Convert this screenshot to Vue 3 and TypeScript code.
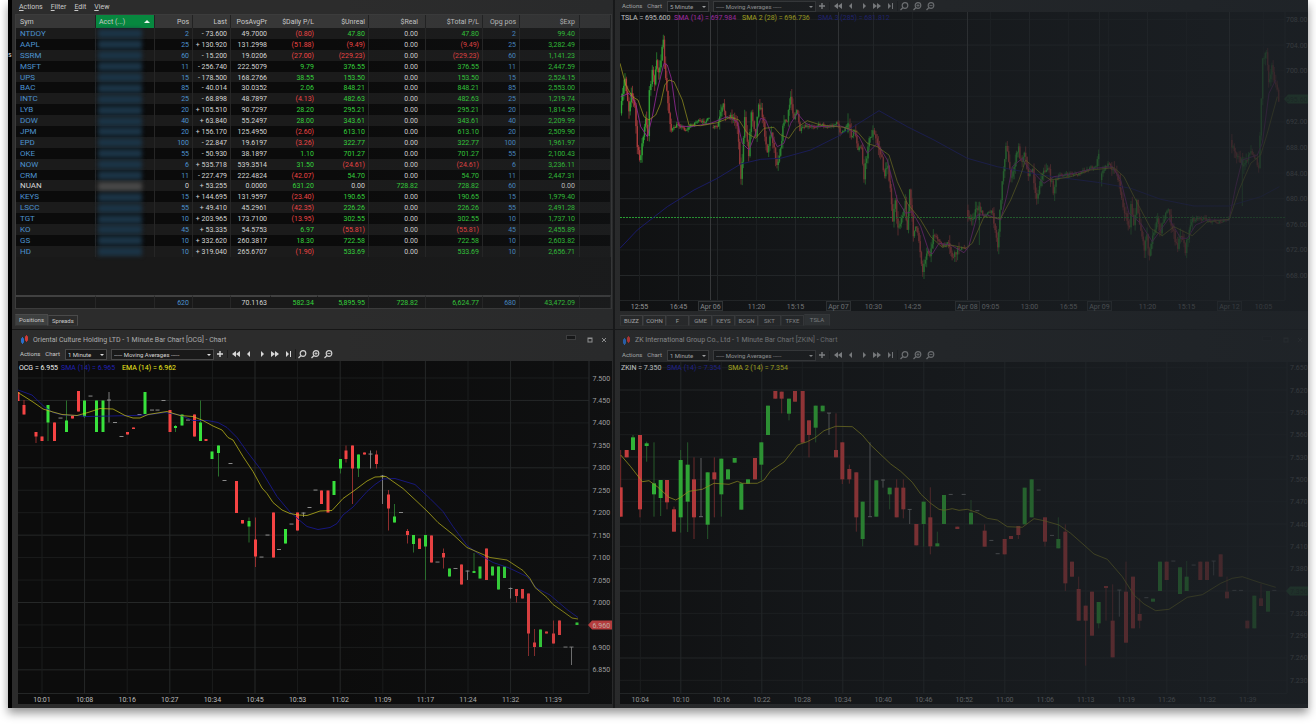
<script setup lang="ts">
import { ref } from 'vue'

type Kind = 'up' | 'down' | 'flat'
type Point = [number, number]
type RawCandle = [string, number, number, number, number, number]

interface Candle { kind: Kind; x: number; high: number; top: number; bottom: number; low: number }
interface Label { text: string; at: number; day?: boolean }
interface Chart {
  id: string
  title: string
  interval: string
  box: { x: number; y: number; w: number; h: number }
  axisX: number
  axisY: number
  tickX: number
  bodyWidth: number
  columns: Label[]
  rows: Label[]
  legend: { text: string; x: number; tone: string }[]
  lines: { tone: string; points: string }[]
  candles: Candle[]
  tag: { text: string; y: number; tone: string }
  level?: number
}

const kinds: Record<string, Kind> = { g: 'up', r: 'down', n: 'flat' }

const toCandles = (raw: RawCandle[], dx = 0, dy = 0, unit = 1): Candle[] =>
  raw.map(([k, x, high, top, bottom, low]) => ({
    kind: kinds[k],
    x: dx + x / unit,
    high: dy + high / unit,
    top: dy + top / unit,
    bottom: dy + bottom / unit,
    low: dy + low / unit,
  }))

const toLine = (points: Point[], dx = 0, dy = 0, unit = 1): string =>
  points.map(([x, y]) => `${(dx + x / unit).toFixed(1)},${(dy + y / unit).toFixed(1)}`).join(' ')

const spread = (texts: string[], start: number, step: number): Label[] =>
  texts.map((text, i) => ({ text, at: start + i * step }))

/* Builds a dense run of thin bars that follows a price path. */
const denseBars = (paths: Point[][], dx: number, unit: number): Candle[] => {
  const out: Candle[] = []
  let seed = 7
  const rnd = () => {
    seed = (seed * 16807) % 2147483647
    return seed / 2147483647
  }
  for (const path of paths) {
    let previous = path[0][1]
    for (let i = 0; i < path.length - 1; i++) {
      const [x0, y0] = path[i]
      const [x1, y1] = path[i + 1]
      const slope = Math.abs(y1 - y0)
      const steps = Math.max(1, Math.round((x1 - x0) / 3.8))
      for (let s = 1; s <= steps; s++) {
        const t = s / steps
        const noise = slope > 22 ? 22 : 9
        const close = y0 + (y1 - y0) * t + (rnd() - 0.5) * noise
        const top = Math.min(previous, close)
        const bottom = Math.max(previous, close)
        const wick = slope > 22 ? 24 : 8
        out.push({
          kind: close < previous ? 'up' : 'down',
          x: dx + (x0 + (x1 - x0) * t) / unit,
          high: (top - rnd() * wick) / unit,
          top: top / unit,
          bottom: bottom / unit,
          low: (bottom + rnd() * wick) / unit,
        })
        previous = close
      }
    }
  }
  return out
}

const columns = ['sym', 'acct', 'pos', 'last', 'avg', 'daily', 'unreal', 'real', 'total', 'opg', 'exp', 'rest']
const headings = ['Sym', 'Acct (...)', 'Pos', 'Last', 'PosAvgPr', '$Daily P/L', '$Unreal', '$Real', '$Total P/L', 'Opg pos', '$Exp', '']

const positions: string[][] = [
  ['NTDOY', '2', '- 73.600', '49.7000', '(0.80)', '47.80', '0.00', '47.80', '2', '99.40'],
  ['AAPL', '25', '+ 130.920', '131.2998', '(51.88)', '(9.49)', '0.00', '(9.49)', '25', '3,282.49'],
  ['SSRM', '60', '- 15.200', '19.0206', '(27.00)', '(229.23)', '0.00', '(229.23)', '60', '1,141.23'],
  ['MSFT', '11', '- 256.740', '222.5079', '9.79', '376.55', '0.00', '376.55', '11', '2,447.59'],
  ['UPS', '15', '- 178.500', '168.2766', '38.55', '153.50', '0.00', '153.50', '15', '2,524.15'],
  ['BAC', '85', '- 40.014', '30.0352', '2.06', '848.21', '0.00', '848.21', '85', '2,553.00'],
  ['INTC', '25', '- 68.898', '48.7897', '(4.13)', '482.63', '0.00', '482.63', '25', '1,219.74'],
  ['LYB', '20', '+ 105.510', '90.7297', '28.20', '295.21', '0.00', '295.21', '20', '1,814.59'],
  ['DOW', '40', '+ 63.840', '55.2497', '28.00', '343.61', '0.00', '343.61', '40', '2,209.99'],
  ['JPM', '20', '+ 156.170', '125.4950', '(2.60)', '613.10', '0.00', '613.10', '20', '2,509.90'],
  ['EPD', '100', '- 22.847', '19.6197', '(3.26)', '322.77', '0.00', '322.77', '100', '1,961.97'],
  ['OKE', '55', '- 50.930', '38.1897', '1.10', '701.27', '0.00', '701.27', '55', '2,100.43'],
  ['NOW', '6', '+ 535.718', '539.3514', '31.50', '(24.61)', '0.00', '(24.61)', '6', '3,236.11'],
  ['CRM', '11', '- 227.479', '222.4824', '(42.07)', '54.70', '0.00', '54.70', '11', '2,447.31'],
  ['NUAN', '0', '+ 53.255', '0.0000', '631.20', '0.00', '728.82', '728.82', '60', '0.00'],
  ['KEYS', '15', '+ 144.695', '131.9597', '(23.40)', '190.65', '0.00', '190.65', '15', '1,979.40'],
  ['LSCC', '55', '+ 49.410', '45.2961', '(42.35)', '226.26', '0.00', '226.26', '55', '2,491.28'],
  ['TGT', '10', '+ 203.965', '173.7100', '(13.95)', '302.55', '0.00', '302.55', '10', '1,737.10'],
  ['KO', '45', '+ 53.335', '54.5753', '6.97', '(55.81)', '0.00', '(55.81)', '45', '2,455.89'],
  ['GS', '10', '+ 332.620', '260.3817', '18.30', '722.58', '0.00', '722.58', '10', '2,603.82'],
  ['HD', '10', '+ 319.040', '265.6707', '(1.90)', '533.69', '0.00', '533.69', '10', '2,656.71'],
]
const totals = ['', '620', '', '70.1163', '582.34', '5,895.95', '728.82', '6,624.77', '680', '43,472.09']

const moneyTone = (value: string) =>
  value.startsWith('(') ? 'loss' : value === '0.00' || value === '' ? 'plain' : 'gain'

const cellTone = (row: string[], i: number): string => {
  if (i === 0 || i === 1) return row[0] === 'NUAN' ? 'plain' : 'link'
  if (i === 8) return 'link'
  if (i === 2 || i === 3) return 'plain'
  return moneyTone(row[i])
}

const menus = ['Actions', 'Filter', 'Edit', 'View']
const sheetTabs = ['Positions', 'Spreads']
const activeSheet = ref('Positions')
const symbolTabs = ['BUZZ', 'COHN', 'F', 'GME', 'KEYS', 'BCGN', 'SKT', 'TFXE', 'TSLA']
const activeSymbol = ref('TSLA')

const ocgCandles: RawCandle[] = [
  ['r', 18, 392, 392, 401, 401], ['r', 24, 400, 405, 414.5, 414.5], ['r', 36, 432, 432, 436.5, 443],
  ['r', 42, 436.5, 436.5, 441, 441], ['g', 48, 405, 405, 422.5, 441], ['r', 54.5, 422.5, 422.5, 441, 441],
  ['n', 60.5, 418, 418, 418, 418], ['g', 66.5, 400.5, 420.5, 432, 432], ['r', 72.5, 415.5, 415.5, 418.5, 418.5],
  ['r', 78.5, 391, 391, 411.5, 411.5], ['g', 84.5, 400.5, 400.5, 416.5, 418], ['n', 90.5, 396, 396, 396, 396],
  ['g', 96.5, 400.5, 400.5, 432, 432], ['g', 103, 400.5, 400.5, 432, 432], ['n', 109, 392, 400, 400, 422.5],
  ['n', 115, 422.5, 422.5, 422.5, 422.5], ['n', 121.5, 436.5, 436.5, 436.5, 436.5], ['r', 127.5, 432, 432, 434.5, 434.5],
  ['r', 133.5, 427.5, 427.5, 429, 429], ['n', 139.5, 414.5, 414.5, 414.5, 414.5], ['g', 145, 392, 392, 414, 414],
  ['n', 152, 410, 410, 410, 410], ['n', 157.5, 410, 410, 410, 410], ['n', 163.5, 400.5, 400.5, 400.5, 400.5],
  ['r', 170, 410, 410, 432, 432], ['g', 175.5, 425, 426, 428, 432], ['g', 182, 414.5, 414.5, 425.5, 425.5],
  ['n', 188, 420, 420, 420, 420], ['r', 194.5, 414.5, 414.5, 436.5, 436.5], ['g', 200.5, 400.5, 422.5, 441, 441],
  ['r', 206, 439, 439, 441, 441], ['g', 212, 451.5, 451.5, 459, 459], ['g', 218.5, 445.5, 445.5, 453, 476.5],
  ['n', 224.5, 480.5, 480.5, 480.5, 480.5], ['n', 230.5, 463.5, 463.5, 463.5, 463.5], ['r', 236.5, 481, 481, 513, 513],
  ['r', 242.5, 520, 520, 523.5, 523.5], ['g', 249, 517.5, 521, 526.5, 542.5], ['r', 255.5, 517.5, 539.5, 556.5, 567],
  ['n', 261.5, 557, 557, 557, 557], ['n', 267.5, 535, 535, 535, 535], ['r', 273.5, 512.5, 512.5, 557.5, 557.5],
  ['n', 279, 549.5, 549.5, 549.5, 549.5], ['g', 285.5, 529, 529, 543.5, 543.5], ['n', 291.5, 524, 524, 524, 524],
  ['r', 297.5, 512.5, 512.5, 530.5, 530.5], ['n', 303.5, 512.5, 513, 513, 517], ['n', 309.5, 507.5, 507.5, 507.5, 507.5],
  ['n', 315.5, 490, 490, 490, 490], ['r', 321.5, 490.5, 490.5, 504, 504], ['r', 328, 490.5, 490.5, 512.5, 512.5],
  ['g', 334, 481, 481, 495, 495], ['g', 340.5, 459, 459, 468.5, 473.5], ['r', 346, 445.5, 450.5, 459, 462.5],
  ['r', 352.5, 445.5, 445.5, 468.5, 504], ['g', 358.5, 454.5, 454.5, 468.5, 477], ['r', 364.5, 452.5, 452.5, 454.5, 454.5],
  ['n', 370.5, 450.5, 454, 454, 468.5], ['r', 376.5, 450.5, 454.5, 464, 468.5], ['n', 382.5, 475, 476, 476, 504],
  ['r', 388.5, 490, 494.5, 508.5, 530.5], ['g', 394.5, 504, 516.5, 522.5, 522.5], ['n', 401, 512.5, 512.5, 512.5, 512.5],
  ['r', 407.5, 529, 531, 535, 543.5], ['g', 413.5, 535, 535, 544, 552.5], ['r', 419.5, 538.5, 538.5, 549, 549],
  ['g', 425.5, 535, 535, 546.5, 580], ['r', 431.5, 535.5, 535.5, 562.5, 562.5], ['n', 437.5, 562, 562, 562, 562],
  ['r', 443.5, 548.5, 553, 557.5, 568.5], ['g', 449.5, 568.5, 568.5, 576.5, 576.5], ['n', 455.5, 568.5, 568.5, 568.5, 568.5],
  ['r', 461.5, 564.5, 564.5, 584.5, 584.5], ['n', 467.5, 570.5, 571, 571, 580], ['g', 474, 553, 571, 573, 573],
  ['g', 480, 566.5, 566.5, 578.5, 578.5], ['r', 486.5, 548.5, 548.5, 580, 580], ['g', 492.5, 566.5, 566.5, 575.5, 575.5],
  ['g', 498.5, 566.5, 566.5, 589.5, 589.5], ['g', 504.5, 566.5, 566.5, 578, 578], ['n', 510.5, 587.5, 588.5, 588.5, 598.5],
  ['r', 516.5, 589, 589, 596, 602.5], ['r', 522.5, 589, 589, 598.5, 598.5], ['r', 528.5, 593.5, 593.5, 633.5, 656],
  ['r', 534.5, 629, 642.5, 647, 656], ['g', 540.5, 629.5, 629.5, 647, 647], ['r', 546.5, 631.5, 631.5, 633.5, 633.5],
  ['r', 553.5, 620.5, 633.5, 643.5, 643.5], ['r', 559.5, 620.5, 620.5, 635, 635], ['n', 565.5, 647, 647, 647, 647],
  ['n', 571.5, 647, 647, 647, 665], ['g', 577, 622.5, 622.5, 625, 625],
]

const ocgEma: Point[] = [
  [18, 392.5], [33, 402], [43, 409], [53, 412], [62, 414.5], [77, 415.5], [88, 412.5], [100, 408.5], [113, 409],
  [125, 415.5], [133, 418], [140, 418], [148, 414.5], [167, 411.5], [180, 415.5], [193, 416.5], [203, 420.5],
  [213, 426], [222, 430], [228, 437.5], [233, 440], [243, 456.5], [253, 471.5], [262, 488], [267, 493.5],
  [273, 502.5], [282, 510], [290, 513.5], [298, 515], [307, 515.5], [313, 513.5], [320, 511], [332, 510.5],
  [343, 498.5], [355, 490], [367, 481], [375, 477], [386, 476.5], [393, 481.5], [403, 488.5], [417, 501.5],
  [428, 512], [438, 522.5], [453, 534.5], [467, 547.5], [482, 554], [490, 557.5], [507, 560], [523, 570.5],
  [530, 578.5], [535, 587.5], [547, 597.5], [553, 604.5], [563, 611.5], [572, 618], [578, 619],
]
const ocgSma: Point[] = [
  [18, 390], [32, 395], [45, 407.5], [53, 412.5], [63, 415], [77, 415.5], [87, 416.5], [133, 415.5], [147, 415],
  [165, 412.5], [180, 415], [193, 420.5], [207, 420.5], [218, 422.5], [227, 427.5], [237, 437.5], [247, 451.5],
  [260, 468.5], [267, 480], [277, 496.5], [290, 512], [298, 519], [307, 526.5], [318, 529.5], [330, 527.5],
  [337, 523.5], [343, 515], [353, 507], [367, 491.5], [375, 484.5], [383, 479], [395, 478.5], [415, 484.5],
  [430, 498.5], [443, 511.5], [453, 526.5], [467, 545.5], [480, 555], [493, 562.5], [508, 567.5], [527, 576.5],
  [537, 588.5], [550, 595], [567, 609.5], [578, 617.5],
]

const zkCandles: RawCandle[] = [
  ['r', 20, 450, 562, 650, 650], ['r', 38, 450, 450, 472, 472], ['g', 57, 405, 412, 450, 450], ['r', 78, 405, 405, 628, 652],
  ['g', 98, 425, 430, 438, 485], ['g', 120, 427, 550, 583, 650], ['g', 140, 540, 540, 594, 648], ['r', 159, 540, 540, 607, 628],
  ['r', 180, 620, 628, 695, 695], ['g', 200, 450, 480, 652, 698], ['g', 221, 427, 494, 605, 696], ['r', 240, 472, 538, 652, 717],
  ['n', 261, 474, 650, 650, 650], ['g', 281, 517, 517, 674, 717], ['r', 301, 472, 517, 538, 652], ['g', 322, 476, 476, 583, 650],
  ['g', 342, 508, 508, 538, 538], ['g', 362, 474, 474, 488, 488], ['g', 382, 550, 550, 629, 629], ['g', 402, 538, 538, 551, 551],
  ['r', 423, 474, 474, 538, 538], ['g', 442, 427, 427, 494, 540], ['g', 462, 317, 317, 405, 405], ['r', 484, 273, 273, 296, 296],
  ['r', 503, 275, 275, 296, 340], ['g', 525, 296, 296, 341, 361], ['r', 543, 273, 273, 305, 305], ['r', 566, 273, 273, 428, 428],
  ['r', 585, 361, 361, 405, 472], ['g', 605, 317, 317, 383, 427], ['g', 626, 317, 317, 334, 334], ['n', 645, 339, 339, 339, 405],
  ['r', 666, 340, 450, 472, 472], ['r', 685, 427, 427, 538, 552], ['r', 706, 494, 507, 538, 551], ['r', 727, 517, 517, 652, 695],
  ['g', 746, 605, 605, 717, 739], ['n', 768, 427, 650, 650, 650], ['g', 787, 541, 541, 650, 650], ['n', 807, 538, 540, 540, 563],
  ['g', 827, 563, 563, 583, 628], ['r', 848, 538, 563, 652, 652], ['r', 868, 538, 563, 628, 655], ['n', 887, 628, 628, 628, 672],
  ['r', 907, 672, 672, 736, 736], ['g', 929, 605, 605, 672, 740], ['r', 949, 562, 652, 739, 763], ['g', 970, 695, 730, 739, 739],
  ['g', 990, 585, 585, 672, 672], ['n', 1010, 583, 583, 583, 583], ['r', 1030, 680, 680, 687, 687], ['n', 1049, 583, 583, 583, 583],
  ['g', 1071, 600, 638, 673, 673], ['n', 1090, 632, 632, 632, 632], ['r', 1112, 673, 692, 740, 740], ['n', 1132, 721, 721, 721, 721],
  ['n', 1151, 761, 761, 761, 761], ['r', 1172, 717, 717, 763, 763], ['r', 1191, 708, 708, 717, 717], ['r', 1213, 678, 678, 705, 717],
  ['g', 1232, 563, 563, 673, 673], ['g', 1253, 538, 538, 652, 652], ['n', 1274, 570, 570, 570, 570], ['r', 1293, 652, 652, 725, 740],
  ['n', 1314, 706, 706, 706, 706], ['g', 1333, 652, 717, 745, 745], ['r', 1354, 673, 695, 850, 873], ['r', 1374, 785, 785, 830, 830],
  ['r', 1394, 830, 867, 962, 962], ['r', 1415, 917, 917, 962, 1097], ['r', 1434, 875, 875, 1007, 1007], ['g', 1454, 906, 906, 970, 985],
  ['r', 1476, 858, 858, 864, 962], ['r', 1496, 853, 962, 1072, 1072], ['n', 1516, 870, 870, 870, 950], ['r', 1536, 785, 875, 1028, 1028],
  ['r', 1557, 830, 830, 985, 985], ['r', 1577, 895, 942, 962, 985], ['n', 1597, 893, 893, 893, 893], ['g', 1617, 896, 896, 905, 905],
  ['g', 1638, 785, 785, 873, 873], ['r', 1658, 785, 785, 840, 840], ['n', 1678, 783, 783, 783, 783], ['g', 1698, 802, 802, 882, 882],
  ['g', 1718, 783, 830, 873, 873], ['n', 1739, 795, 795, 795, 795], ['r', 1759, 785, 785, 840, 840], ['r', 1779, 785, 785, 840, 840],
  ['n', 1799, 783, 783, 783, 826], ['r', 1820, 763, 763, 830, 830], ['r', 1839, 830, 875, 895, 895], ['n', 1861, 871, 871, 871, 871],
  ['n', 1881, 871, 871, 871, 871], ['r', 1900, 962, 962, 985, 985], ['g', 1921, 887, 887, 985, 985], ['r', 1941, 852, 895, 918, 918],
  ['g', 1962, 873, 873, 935, 935], ['n', 1981, 871, 871, 871, 871],
]
const zkSma: Point[] = [
  [20, 465], [50, 500], [85, 545], [105, 542], [130, 560], [165, 592], [185, 600], [200, 592], [225, 574], [265, 568],
  [300, 550], [345, 553], [370, 544], [385, 550], [430, 550], [450, 540], [470, 512], [510, 486], [550, 435], [580, 425],
  [605, 412], [630, 392], [665, 379], [715, 380], [745, 405], [770, 435], [830, 492], [860, 514], [895, 547], [920, 582],
  [950, 610], [975, 628], [990, 631], [1015, 626], [1035, 631], [1060, 628], [1090, 638], [1120, 655], [1150, 660],
  [1180, 680], [1225, 682], [1260, 656], [1290, 662], [1335, 675], [1370, 700], [1410, 735], [1440, 762], [1480, 778],
  [1525, 830], [1560, 885], [1590, 912], [1625, 932], [1665, 928], [1720, 892], [1765, 884], [1820, 850], [1855, 835],
  [1885, 830], [1935, 847], [1985, 862],
]

const tslaPath: Point[][] = [
  [
    [19, 340], [33, 235], [45, 330], [52, 270], [62, 320], [70, 440], [77, 480], [88, 410], [95, 360], [101, 400],
    [106, 270], [115, 215], [122, 245], [128, 190], [134, 215], [148, 130], [155, 240], [162, 310], [172, 390],
    [180, 385], [192, 372], [215, 390], [230, 378], [250, 362], [262, 368], [285, 357],
  ],
  [
    [294, 382], [310, 380], [328, 318], [338, 355], [350, 345], [370, 370], [381, 540], [392, 360], [404, 460],
    [412, 335], [425, 400], [434, 305], [445, 345], [460, 455], [472, 395], [489, 495], [500, 440], [510, 360],
    [520, 365], [530, 290], [540, 350], [548, 330], [558, 390], [575, 380], [590, 382], [622, 372], [640, 382],
    [655, 376], [672, 368], [678, 405], [690, 390], [704, 370], [712, 410], [722, 390], [732, 440], [742, 440],
    [750, 535], [762, 430], [777, 395], [790, 430], [800, 460], [812, 525], [822, 490], [836, 660], [844, 610],
    [852, 690], [862, 650], [874, 610], [880, 690], [887, 575], [898, 700], [905, 680], [915, 720], [926, 815],
    [938, 750], [948, 765], [958, 710], [975, 720], [985, 740], [1000, 730], [1018, 775], [1035, 745], [1055, 745],
  ],
  [
    [1058, 630], [1073, 665], [1088, 620], [1106, 645], [1136, 635], [1151, 740], [1161, 590], [1176, 430], [1184, 490],
    [1194, 540], [1204, 480], [1214, 445], [1221, 490], [1231, 450], [1243, 520], [1256, 510], [1268, 600], [1281, 530],
    [1301, 500], [1318, 570], [1326, 545], [1338, 525], [1361, 525], [1371, 520], [1391, 525], [1411, 512], [1431, 502],
    [1446, 500], [1454, 455],
  ],
  [
    [1459, 540], [1471, 505], [1486, 490], [1516, 535], [1523, 600], [1536, 650], [1546, 680], [1551, 610], [1559, 670],
    [1568, 610], [1581, 690], [1591, 745], [1599, 700], [1606, 770], [1616, 700], [1631, 660], [1641, 690], [1651, 650],
    [1663, 630], [1676, 690], [1691, 740], [1703, 700], [1714, 750], [1726, 690], [1736, 660], [1766, 655], [1791, 662],
    [1816, 668], [1844, 658],
  ],
  [
    [1850, 420], [1861, 460], [1886, 490], [1911, 460], [1926, 475], [1934, 510], [1938, 400], [1946, 180], [1958, 150],
    [1964, 240], [1974, 200], [1981, 240], [1994, 300],
  ],
]
const tslaFast: Point[] = [
  [20, 290], [45, 280], [65, 310], [80, 380], [100, 410], [115, 350], [130, 270], [150, 190], [160, 195], [172, 235],
  [185, 330], [195, 378], [230, 380], [290, 370], [340, 350], [370, 365], [385, 430], [405, 450], [425, 400], [440, 355],
  [455, 360], [475, 410], [490, 440], [510, 430], [530, 370], [550, 340], [575, 370], [600, 380], [680, 378], [710, 390],
  [735, 410], [760, 460], [790, 430], [820, 480], [850, 600], [875, 640], [895, 635], [920, 680], [945, 755], [955, 762],
  [975, 730], [1010, 735], [1050, 758], [1064, 740], [1090, 645], [1120, 645], [1160, 660], [1180, 580], [1195, 500],
  [1225, 475], [1240, 500], [1270, 530], [1290, 550], [1320, 530], [1380, 520], [1440, 505], [1495, 500], [1520, 540],
  [1545, 640], [1580, 670], [1615, 725], [1640, 690], [1665, 655], [1700, 715], [1720, 715], [1745, 675], [1780, 660],
  [1845, 660], [1865, 560], [1885, 480], [1930, 465], [1945, 430], [1965, 280], [1985, 240],
]
const tslaMid: Point[] = [
  [18, 190], [35, 255], [55, 290], [72, 300], [90, 350], [105, 360], [125, 345], [140, 310], [152, 255], [165, 240],
  [180, 245], [205, 300], [225, 375], [260, 377], [310, 368], [350, 352], [375, 360], [400, 400], [425, 415], [450, 385],
  [480, 382], [500, 405], [525, 415], [545, 385], [580, 362], [620, 375], [690, 382], [730, 395], [760, 430], [790, 440],
  [825, 465], [850, 545], [880, 610], [920, 660], [950, 710], [985, 742], [1010, 735], [1055, 745], [1075, 730],
  [1110, 650], [1160, 655], [1190, 600], [1215, 540], [1235, 480], [1280, 520], [1310, 540], [1370, 530], [1430, 510],
  [1500, 503], [1530, 530], [1560, 590], [1610, 685], [1645, 707], [1680, 680], [1735, 707], [1780, 665], [1846, 658],
  [1875, 570], [1910, 490], [1940, 465], [1960, 400], [1990, 290],
]
const tslaSlow: Point[] = [
  [18, 745], [70, 690], [160, 620], [240, 570], [310, 535], [380, 492], [440, 478], [500, 475], [590, 450], [670, 410],
  [795, 332], [880, 380], [960, 420], [1060, 475], [1150, 500], [1280, 525], [1450, 547], [1550, 565], [1640, 598],
  [1740, 618], [1845, 618], [1940, 590], [1996, 560],
]

const charts: Chart[] = [
  {
    id: 'tsla',
    title: '',
    interval: '5 Minute',
    box: { x: 620, y: 12, w: 688, h: 299 },
    axisX: 1285,
    axisY: 300,
    tickX: 1286,
    bodyWidth: 1.4,
    columns: [
      { text: '12:55', at: 639.5 }, { text: '16:45', at: 678.5 }, { text: 'Apr 06', at: 710.5, day: true }, { text: '', at: 717.5 },
      { text: '11:20', at: 756.5 }, { text: '15:15', at: 795.5 }, { text: 'Apr 07', at: 838.5, day: true }, { text: '10:30', at: 873.5 },
      { text: '14:25', at: 912.5 }, { text: 'Apr 08', at: 967.5, day: true }, { text: '09:05', at: 990.5 }, { text: '13:00', at: 1029.5 },
      { text: '16:55', at: 1068.5 }, { text: 'Apr 09', at: 1099.5, day: true }, { text: '', at: 1108.5 }, { text: '11:20', at: 1147.5 },
      { text: '15:15', at: 1186.5 }, { text: 'Apr 12', at: 1229.5, day: true }, { text: '10:05', at: 1263.5 },
    ],
    rows: spread(
      ['708.00', '704.00', '700.00', '', '692.00', '688.00', '684.00', '680.00', '676.00', '672.00', '668.00'],
      19.5,
      25.6,
    ),
    legend: [
      { text: 'TSLA = 695.600', x: 621, tone: 'white' },
      { text: 'SMA (14) = 697.984', x: 674, tone: 'magenta' },
      { text: 'SMA 2 (28) = 696.736', x: 742, tone: 'yellow' },
      { text: 'SMA 3 (285) = 681.812', x: 818, tone: 'blue' },
    ],
    lines: [
      { tone: 'blue', points: toLine(tslaSlow, 614, 0, 3) },
      { tone: 'magenta', points: toLine(tslaFast, 614, 0, 3) },
      { tone: 'yellow', points: toLine(tslaMid, 614, 0, 3) },
    ],
    candles: [
      ...denseBars(tslaPath, 614, 3),
      ...toCandles([['g', 1096, 605, 640, 660, 735], ['g', 1885, 470, 480, 495, 618], ['g', 702, 340, 370, 395, 400]], 614, 0, 3),
    ],
    tag: { text: '695.60', y: 99, tone: 'up' },
    level: 217.5,
  },
  {
    id: 'ocg',
    title: 'Oriental Culture Holding LTD - 1 Minute Bar Chart [OCG] - Chart',
    interval: '1 Minute',
    box: { x: 18, y: 361, w: 594, h: 343 },
    axisX: 589,
    axisY: 693,
    tickX: 592.5,
    bodyWidth: 3,
    columns: spread(
      ['10:01', '10:08', '10:16', '10:27', '10:34', '10:45', '10:53', '11:02', '11:09', '11:17', '11:24', '11:32', '11:39'],
      42,
      42.6,
    ),
    rows: spread(
      ['7.500', '7.450', '7.400', '7.350', '7.300', '7.250', '7.200', '7.150', '7.100', '7.050', '7.000', '', '6.900', '6.850'],
      378,
      22.45,
    ),
    legend: [
      { text: 'OCG = 6.955', x: 19, tone: 'white' },
      { text: 'SMA (14) = 6.965', x: 61, tone: 'blue' },
      { text: 'EMA (14) = 6.962', x: 122, tone: 'yellow' },
    ],
    lines: [
      { tone: 'blue', points: toLine(ocgSma) },
      { tone: 'yellow', points: toLine(ocgEma) },
    ],
    candles: toCandles(ocgCandles),
    tag: { text: '6.960', y: 625, tone: 'down' },
  },
  {
    id: 'zkin',
    title: 'ZK International Group Co., Ltd - 1 Minute Bar Chart [ZKIN] - Chart',
    interval: '1 Minute',
    box: { x: 620, y: 362, w: 688, h: 342 },
    axisX: 1287,
    axisY: 693,
    tickX: 1290,
    bodyWidth: 4,
    columns: spread(
      ['10:04', '10:10', '10:16', '10:22', '10:28', '10:34', '10:40', '10:46', '10:52', '11:00', '11:06', '11:13', '11:19', '11:26', '11:32', '11:39'],
      640.3,
      40.5,
    ),
    rows: spread(
      ['7.650', '7.620', '7.590', '7.560', '7.530', '7.500', '7.470', '7.440', '7.410', '7.380', '', '7.320', '7.290', '7.260', '7.230'],
      367.7,
      22.33,
    ),
    legend: [
      { text: 'ZKIN = 7.350', x: 621, tone: 'white' },
      { text: 'SMA (14) = 7.354', x: 667, tone: 'blue' },
      { text: 'SMA 2 (14) = 7.354', x: 728, tone: 'yellow' },
    ],
    lines: [{ tone: 'yellow', points: toLine(zkSma, 614, 300, 3) }],
    candles: toCandles(zkCandles, 614, 300, 3),
    tag: { text: '7.350', y: 591, tone: 'up' },
  },
]

const steps = [
  { name: 'First bar', d: 'M5 1v6L1 4zM9 1v6L5 4z' },
  { name: 'Previous bar', d: 'M6 1v6L3 4z' },
  { name: 'Next bar', d: 'M4 1v6l3-3z' },
  { name: 'Fast forward', d: 'M1 1v6l4-3zM5 1v6l4-3z' },
  { name: 'Last bar', d: 'M3 1v6l3-3zM7 1h1v6H7z' },
]
const lenses = [
  { name: 'Zoom', d: '' },
  { name: 'Zoom in', d: 'M4.500 3.500h3M6 2v3' },
  { name: 'Zoom out', d: 'M4.500 3.500h3' },
]
</script>

<template>
  <main class="desk">
    <div class="strip">s</div>

    <section class="pane positions">
      <nav class="menubar">
        <button v-for="m in menus" :key="m" type="button"><u>{{ m[0] }}</u>{{ m.slice(1) }}</button>
      </nav>
      <table>
        <colgroup><col v-for="c in columns" :key="c" :class="'w-' + c" /></colgroup>
        <thead>
          <tr>
            <th v-for="(h, i) in headings" :key="i" :class="columns[i]" scope="col">
              <span v-if="columns[i] === 'acct'" class="sorted">{{ h }}<i></i></span>
              <template v-else>{{ h }}</template>
            </th>
          </tr>
        </thead>
        <tbody>
          <tr v-for="row in positions" :key="row[0]">
            <td :class="['sym', cellTone(row, 0)]">{{ row[0] }}</td>
            <td class="acct"><span :class="['masked', cellTone(row, 0)]"></span></td>
            <td v-for="i in 9" :key="i" :class="[columns[i + 1], cellTone(row, i)]">{{ row[i] }}</td>
            <td class="rest"></td>
          </tr>
          <tr class="filler"><td colspan="12"></td></tr>
        </tbody>
        <tfoot>
          <tr>
            <td class="sym"></td>
            <td class="acct"></td>
            <td v-for="i in 9" :key="i" :class="[columns[i + 1], cellTone(totals, i)]">{{ totals[i] }}</td>
            <td class="rest"></td>
          </tr>
        </tfoot>
      </table>
      <div class="tabs sheet">
        <button
          v-for="t in sheetTabs"
          :key="t"
          type="button"
          :class="{ active: t === activeSheet }"
          @click="activeSheet = t"
        >{{ t }}</button>
      </div>
    </section>

    <section v-for="c in charts" :key="c.id" :class="['pane', 'chart', c.id]">
      <header v-if="c.title" class="titlebar">
        <svg class="logo" viewBox="0 0 9 9" aria-hidden="true">
          <path d="M2.500 2v7" stroke="#2f6fc0" /><rect x="1" y="3" width="3" height="5" rx="1" fill="#2a6fca" />
          <path d="M6.500 0v7" stroke="#c03030" /><rect x="5" y="1" width="3" height="5" rx="1" fill="#d03a36" />
        </svg>
        <h2>{{ c.title }}</h2>
        <button type="button" class="min" aria-label="Minimize"></button>
        <button type="button" aria-label="Restore">
          <svg viewBox="0 0 8 8"><rect x="2" y="2" width="4" height="4" /><path d="M2 2.500h4" /></svg>
        </button>
        <button type="button" aria-label="Close">
          <svg viewBox="0 0 8 8"><path d="M2 2l4 4M6 2L2 6" /></svg>
        </button>
      </header>

      <div class="toolbar">
        <button type="button" class="word">Actions</button>
        <button type="button" class="word">Chart</button>
        <label class="pick interval">
          <select aria-label="Interval"><option>{{ c.interval }}</option></select>
        </label>
        <label class="pick study">
          <select aria-label="Study"><option>----- Moving Averages -----</option></select>
        </label>
        <button type="button" class="glyph plus" aria-label="Add study">
          <svg viewBox="0 0 10 8"><path d="M4.300 1h1.400v2.300H8v1.400H5.700V7H4.300V4.700H2V3.300h2.300z" /></svg>
        </button>
        <button v-for="s in steps" :key="s.name" type="button" class="glyph" :aria-label="s.name">
          <svg viewBox="0 0 10 8"><path :d="s.d" /></svg>
        </button>
        <span class="rule"></span>
        <button v-for="l in lenses" :key="l.name" type="button" class="glyph lens" :aria-label="l.name">
          <svg viewBox="0 0 10 8"><circle cx="6" cy="3.500" r="2.800" /><path d="M4 5.500L1.500 8" /><path class="thin" :d="l.d" /></svg>
        </button>
      </div>

      <svg class="plot" :viewBox="`${c.box.x} ${c.box.y} ${c.box.w} ${c.box.h}`" role="img" :aria-label="c.id + ' price chart'">
        <rect :x="c.box.x" :y="c.box.y" :width="c.box.w" :height="c.box.h" class="ground" />
        <line
          v-for="(r, i) in c.rows"
          :key="'r' + i"
          :class="['grid', { strong: i % 3 === 1 }]"
          :x1="c.box.x" :x2="c.axisX" :y1="r.at" :y2="r.at"
        />
        <line
          v-for="(v, i) in c.columns"
          :key="'c' + i"
          :class="['grid', { strong: i % 2 === 1, day: v.day && v.text !== 'Apr 09' }]"
          :x1="v.at" :x2="v.at" :y1="c.box.y" :y2="c.axisY"
        />
        <line class="edge" :x1="c.axisX" :x2="c.axisX" :y1="c.box.y" :y2="c.axisY" />
        <line class="base" :x1="c.box.x" :x2="c.axisX" :y1="c.axisY + 0.5" :y2="c.axisY + 0.5" />

        <g v-for="(k, i) in c.candles" :key="'k' + i" :class="['candle', k.kind]">
          <line v-if="k.low > k.high" :x1="k.x" :x2="k.x" :y1="k.high" :y2="k.low" />
          <rect
            v-if="k.kind === 'flat'"
            :x="k.x - 2" :y="k.top - 0.4" width="4" height="0.9"
          />
          <rect
            v-else
            :x="k.x - c.bodyWidth / 2" :y="k.top" :width="c.bodyWidth" :height="Math.max(1, k.bottom - k.top)"
          />
        </g>

        <line v-if="c.level" class="level" :x1="c.box.x" :x2="c.axisX" :y1="c.level" :y2="c.level" />
        <polyline v-for="l in c.lines" :key="l.tone" :class="['average', l.tone]" :points="l.points" />

        <text v-for="l in c.legend" :key="l.text" :class="['legend', l.tone]" :x="l.x" :y="c.title ? 370 : 20">{{ l.text }}</text>
        <text v-for="(r, i) in c.rows" :key="'l' + i" class="tick" :x="c.tickX" :y="r.at + 2.5">{{ r.text }}</text>
        <g v-for="(v, i) in c.columns" :key="'t' + i">
          <rect v-if="v.day" class="daybox" :x="v.at - 12" :y="c.axisY + 1.5" width="24" height="9" />
          <text class="tick mid" :x="v.at" :y="c.axisY + 9">{{ v.text }}</text>
        </g>
        <g :class="['tag', c.tag.tone]">
          <path :d="`M${c.axisX - 1} ${c.tag.y}l4-4.500h20v9h-20z`" />
          <text class="tick" :x="c.tickX" :y="c.tag.y + 2.5">{{ c.tag.text }}</text>
        </g>
      </svg>

      <div v-if="!c.title" class="tabs symbols">
        <button
          v-for="t in symbolTabs"
          :key="t"
          type="button"
          :class="{ active: t === activeSymbol }"
          @click="activeSymbol = t"
        >{{ t }}</button>
      </div>
    </section>
  </main>
</template>

<style>
body {
  margin: 0;
  background: #fff;
}
</style>

<style scoped>
.desk {
  position: relative;
  display: grid;
  grid-template-columns: 4px 603fr 693fr;
  grid-template-rows: 330px auto;
  margin: 0 8px 16px;
  background: #000;
  box-shadow: 0 5px 9px rgba(0, 0, 0, 0.42);
  font-family: Roboto, 'Liberation Sans', sans-serif;
  font-size: 7px;
  color: #c9c9c9;
}
.desk::after {
  content: '';
  position: absolute;
  inset: 0;
  pointer-events: none;
  background: linear-gradient(
    90deg,
    rgba(29, 34, 39, 0) 25%,
    rgba(29, 34, 39, 0.2) 46%,
    rgba(29, 34, 39, 0.46) 60%,
    rgba(29, 34, 39, 0.66) 77%,
    rgba(29, 34, 39, 0.86) 97%
  );
}
.strip {
  grid-row: 1 / 3;
  padding-top: 51px;
  line-height: 8px;
  color: #ddd;
}
button {
  border: 0;
  padding: 0;
  background: none;
  font: inherit;
  color: inherit;
}
.pane {
  min-width: 0;
  box-sizing: border-box;
  background: #2c2c2c;
}
.positions {
  padding: 0 1px 0 3px;
  border-right: 2px solid #161616;
  border-bottom: 1px solid #161616;
}
.menubar {
  display: flex;
  align-items: center;
  gap: 8px;
  height: 14px;
  padding-left: 4px;
}
table {
  width: 100%;
  height: 295px;
  box-sizing: border-box;
  table-layout: fixed;
  border-spacing: 0;
  border: 1px solid #3c3c3c;
  background: #191919;
  line-height: 8px;
}
.w-sym { width: 80px; }
.w-acct { width: 59px; }
.w-pos, .w-last { width: 38px; }
.w-avg { width: 40px; }
.w-daily { width: 47px; }
.w-unreal { width: 51px; }
.w-real, .w-total { width: 57px; }
.w-opg { width: 37px; }
.w-exp { width: 60px; }
th, td {
  padding: 0 3px 0 0;
  text-align: right;
  white-space: nowrap;
  border-right: 1px solid #262626;
}
th {
  height: 13px;
  background: #373737;
  font-weight: 400;
  border-right-color: #222;
}
.avg, .daily {
  border-right-color: transparent;
}
.real {
  padding-right: 7px;
}
.exp {
  padding-right: 4px;
}
td.sym, th.sym {
  padding-left: 4px;
  text-align: left;
}
td.sym {
  font-size: 8px;
}
th.acct {
  padding: 0 4px 0 3px;
  background: #07883f;
  text-align: left;
}
.sorted {
  display: flex;
  align-items: center;
  justify-content: space-between;
}
.sorted i {
  border: 3px solid transparent;
  border-top: 0;
  border-bottom-color: #e8f5ec;
}
tbody td {
  padding-top: 1px;
}
tbody tr:nth-child(odd) td {
  background: #1b1b1b;
}
tbody tr:nth-child(even) td {
  background: #0b0b0b;
}
tbody tr.filler td {
  height: 37px;
  background: #191919;
  border-right: 0;
}
tfoot td {
  height: 11px;
  border-top: 2px solid #414141;
}
.masked {
  display: block;
  width: 44px;
  height: 9px;
  margin-left: 2px;
  filter: blur(2px);
}
.masked.link { background: #1b3446; }
.masked.plain { background: #484848; }
td.link { color: #4b92cf; }
td.gain { color: #35d23b; }
td.loss { color: #ee4545; }
td.plain { color: #d4d4d4; }

.tabs {
  display: flex;
  align-items: flex-end;
  font-size: 6px;
  line-height: 8px;
}
.tabs button {
  height: 11px;
  border: 1px solid #4a4a4a;
  border-left-color: #3a3a3a;
  border-bottom-color: #333;
}
.tabs .active {
  height: 12px;
  background: #3e4040;
}
.sheet {
  margin-top: 5px;
}
.sheet button {
  padding: 0 3px;
}
.symbols {
  margin-top: 3px;
  height: 12px;
}
.symbols button {
  width: 23px;
}
.symbols .active {
  width: 26px;
}

.chart {
  padding: 0 0 4px 5px;
}
.chart.ocg {
  padding: 0 1px 4px 6px;
  border-right: 2px solid #161616;
}
.chart.tsla {
  border-bottom: 1px solid #161616;
}
.titlebar {
  display: flex;
  align-items: center;
  height: 17px;
  box-sizing: border-box;
  padding: 2px 4px 0 2px;
}
.zkin .titlebar {
  height: 18px;
}
.logo {
  width: 9px;
  height: 9px;
}
.titlebar h2 {
  flex: 1;
  margin: 0 0 0 4px;
  font-size: 7px;
  font-weight: 400;
  color: #adadad;
}
.titlebar button {
  width: 8px;
  height: 8px;
  margin-left: 6px;
}
.titlebar .min {
  width: 10px;
  height: 5px;
  margin: 0 4px 4px 0;
  border: 1px solid #444;
  background: #161616;
}
.titlebar button svg {
  display: block;
  width: 8px;
  height: 8px;
  fill: none;
  stroke: #a8a8a8;
}
.zkin .titlebar button {
  opacity: 0.4;
}
.toolbar {
  display: flex;
  align-items: center;
  height: 14px;
  padding-left: 2px;
  font-size: 6px;
}
.tsla .toolbar {
  height: 12px;
}
.word {
  margin-right: 5px;
  line-height: 8px;
}
.pick {
  position: relative;
  display: block;
  height: 11px;
}
.pick::after {
  content: '';
  position: absolute;
  right: 3px;
  top: 5px;
  border: 2px solid transparent;
  border-bottom: 0;
  border-top-color: #ddd;
}
.pick select {
  display: block;
  width: 100%;
  height: 11px;
  padding: 0 2px;
  appearance: none;
  border: 1px solid #484848;
  border-radius: 0;
  background: #191919;
  font: inherit;
  color: #d4d4d4;
}
.interval {
  width: 42px;
  margin-right: 4px;
}
.study {
  width: 103px;
}
.glyph {
  width: 10px;
  height: 8px;
  margin-left: 3px;
}
.glyph svg {
  display: block;
  width: 10px;
  height: 8px;
  overflow: visible;
  fill: #d8d8d8;
}
.plus {
  margin: 0 0 0 1px;
  padding-right: 2px;
  box-sizing: content-box;
  border-right: 1px solid #1c1c1c;
}
.lens svg {
  fill: none;
  stroke: #d0d0d0;
  stroke-width: 1.2;
}
.lens .thin {
  stroke-width: 0.8;
}
.rule {
  width: 1px;
  height: 10px;
  margin-left: 2px;
  background: #1c1c1c;
}
.rule + .glyph {
  margin-left: 1px;
}

.plot {
  display: block;
  width: 100%;
  height: auto;
}
.ground { fill: #0c0c0c; }
.grid {
  stroke: #1b1c1c;
  stroke-width: 1;
}
.grid.strong { stroke: #262828; }
.grid.day { stroke: #444; }
.edge { stroke: #2d2f30; stroke-width: 1; }
.base { stroke: #242626; }
.candle line { stroke-width: 0.9; }
.candle.up { fill: #38e23c; stroke: none; }
.candle.down { fill: #f64444; }
.candle.flat { fill: #999; }
.candle.up line { stroke: #2c7a30; }
.candle.down line { stroke: #a33232; }
.candle.flat line { stroke: #8a8a8a; }
.tsla .candle.up { fill: #34cf39; }
.tsla .candle.down { fill: #d84242; }
.tsla .candle.up line { stroke: #289a2e; }
.tsla .candle.down line { stroke: #ae3838; }
.average {
  fill: none;
  stroke-width: 0.9;
}
.average.yellow { stroke: #c9c31c; stroke-opacity: 0.8; }
.average.blue { stroke: #18188c; }
.average.magenta { stroke: #b428b4; }
.level {
  stroke: #2cc236;
  stroke-dasharray: 2 1;
}
.legend {
  font-size: 7px;
}
.legend.white { fill: #f0f0f0; }
.legend.blue { fill: #2020b4; }
.legend.yellow { fill: #f2ed1c; }
.legend.magenta { fill: #dc2cdc; }
.tick {
  font-size: 7px;
  fill: #bcbcbc;
}
.tick.mid { text-anchor: middle; }
.daybox {
  fill: #121414;
  stroke: #3c3e3e;
}
.tag.down path { fill: #d94343; }
.tag.up path { fill: #2a8a3a; }
.tag .tick { fill: #e8c9c0; }
.tag.up .tick { fill: #123c1c; }
</style>
